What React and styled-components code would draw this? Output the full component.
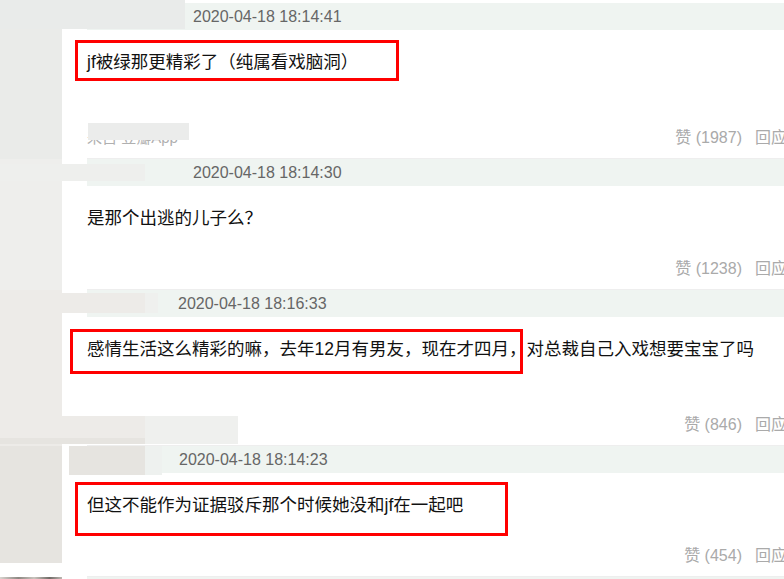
import React from 'react';
import styled, { createGlobalStyle } from 'styled-components';

const Global = createGlobalStyle`
  html, body { margin: 0; padding: 0; background: #fff; overflow: hidden; }
  body { font-family: "Liberation Sans", "Noto Sans CJK SC", sans-serif; }
`;

const Page = styled.div`
  position: relative;
  width: 800px;
  height: 579px;
  overflow: hidden;
`;

const List = styled.div`
  display: flex;
  flex-direction: column;
  padding-top: 3px;
`;

const Row = styled.div`
  display: flex;
`;

const Avatar = styled.div`
  width: 62px;
  flex: none;
  background: ${(p) => p.$tone};
  margin-bottom: ${(p) => p.$cut || 0}px;
`;

const Main = styled.div`
  flex: 1;
  margin-left: 25px;
  display: flex;
  flex-direction: column;
  padding-bottom: 9px;
  border-bottom: 1px solid #eeeeee;
`;

const Header = styled.div`
  height: 27px;
  background: #eff4f1;
  padding-left: ${(p) => p.$indent}px;
  font: 16px/27px "Liberation Sans", Arial, sans-serif;
  color: #666;
`;

const Text = styled.p`
  margin: 19px 0 0;
  font-family: "Liberation Sans", "Noto Sans CJK SC", sans-serif;
  font-size: 17.5px;
  line-height: 26px;
  color: #111;
  white-space: nowrap;
`;

const Footer = styled.div`
  margin-top: ${(p) => p.$gap}px;
  height: 26px;
  display: flex;
  align-items: center;
  justify-content: space-between;
  padding-right: 13px;
  font-family: "Liberation Sans", "Noto Sans CJK SC", sans-serif;
  font-size: 16px;
  color: #aaa;
  white-space: nowrap;
`;

const Source = styled.span`
  font-size: 15px;
  color: #b0b0b0;
`;

const Actions = styled.div`
  display: flex;
  gap: 13px;
`;

const Redact = styled.div`
  position: absolute;
  left: ${(p) => p.$x}px;
  top: ${(p) => p.$y}px;
  width: ${(p) => p.$w}px;
  height: ${(p) => p.$h}px;
  background: ${(p) => p.$c};
`;

const Mark = styled.div`
  position: absolute;
  left: ${(p) => p.$x}px;
  top: ${(p) => p.$y}px;
  width: ${(p) => p.$w}px;
  height: ${(p) => p.$h}px;
  border: 3px solid #ff0000;
  box-sizing: border-box;
`;

const comments = [
  { time: '2020-04-18 18:14:41', indent: 106, text: 'jf被绿那更精彩了（纯属看戏脑洞）', likes: 1987, source: '来自 豆瓣App', tone: '#eaebe9' },
  { time: '2020-04-18 18:14:30', indent: 106, text: '是那个出逃的儿子么？', likes: 1238, tone: '#eeeeec' },
  { time: '2020-04-18 18:16:33', indent: 91, text: '感情生活这么精彩的嘛，去年12月有男友，现在才四月，对总裁自己入戏想要宝宝了吗', likes: 846, source: '来自 豆瓣App', tone: '#edebe8' },
  { time: '2020-04-18 18:14:23', indent: 92, text: '但这不能作为证据驳斥那个时候她没和jf在一起吧', likes: 454, tone: '#e6e4e0', cut: 14 },
];

const redactions = [
  { x: 0, y: 0, w: 185, h: 29, c: '#e9ebea' },
  { x: 88, y: 123, w: 101, h: 17, c: '#ebeceb' },
  { x: 0, y: 164, w: 145, h: 17, c: '#eeefed' },
  { x: 0, y: 293, w: 145, h: 20, c: '#edebe8' },
  { x: 145, y: 293, w: 13, h: 20, c: '#eff0ee' },
  { x: 0, y: 416, w: 145, h: 22, c: '#edebe8' },
  { x: 0, y: 438, w: 145, h: 6, c: '#e6e4e0' },
  { x: 145, y: 416, w: 93, h: 28, c: '#eff0ee' },
  { x: 69, y: 446, w: 76, h: 29, c: '#e6e4e0' },
  { x: 145, y: 446, w: 17, h: 29, c: '#eef1ef' },
];

const marks = [
  { x: 75, y: 40, w: 324, h: 41 },
  { x: 70, y: 329, w: 453, h: 45 },
  { x: 75, y: 482, w: 433, h: 54 },
];

export default function App() {
  return (
    <Page>
      <Global />
      <List>
        {comments.map((c) => (
          <Row key={c.time}>
            <Avatar $tone={c.tone} $cut={c.cut} />
            <Main>
              <Header $indent={c.indent}>{c.time}</Header>
              <Text>{c.text}</Text>
              <Footer $gap={c.source ? 48 : 23}>
                <Source>{c.source || ''}</Source>
                <Actions>
                  <span>赞 ({c.likes})</span>
                  <span>回应</span>
                </Actions>
              </Footer>
            </Main>
          </Row>
        ))}
        <Row>
          <Avatar $tone="linear-gradient(90deg,#d8d4cf 0%,#8c8782 30%,#c9c4be 55%,#6f6a66 80%,#bdb8b2 100%)" />
          <Main>
            <Header $indent={106}>2020-04-18 18:20:05</Header>
          </Main>
        </Row>
      </List>
      {redactions.map((r, i) => (
        <Redact key={i} $x={r.x} $y={r.y} $w={r.w} $h={r.h} $c={r.c} />
      ))}
      {marks.map((m, i) => (
        <Mark key={i} $x={m.x} $y={m.y} $w={m.w} $h={m.h} />
      ))}
    </Page>
  );
}
